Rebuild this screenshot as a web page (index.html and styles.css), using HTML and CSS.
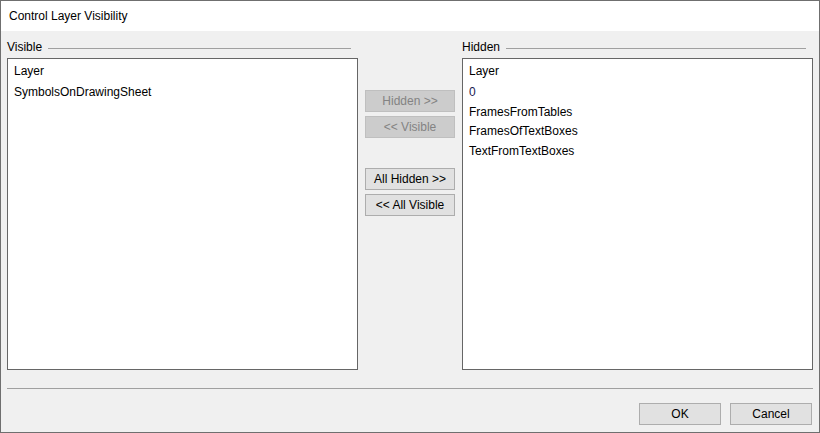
FILE: index.html
```html
<!DOCTYPE html>
<html lang="en">
<head>
    <meta charset="UTF-8">
    <title>Control Layer Visibility</title>
    <link rel="stylesheet" href="styles.css">
</head>
<body>
    <div class="dialog">
        <div class="titleBar">Control Layer Visibility</div>

        <div class="content">
            <div class="panes">
                <div class="group">
                    <div class="groupHead"><span>Visible</span><i></i></div>
                    <div class="listBox">
                        <div class="listHead">Layer</div>
                        <div class="item">SymbolsOnDrawingSheet</div>
                    </div>
                </div>

                <div class="moveBtns">
                    <button class="btn" disabled>Hidden &gt;&gt;</button>
                    <button class="btn" disabled>&lt;&lt; Visible</button>
                    <button class="btn all">All Hidden &gt;&gt;</button>
                    <button class="btn">&lt;&lt; All Visible</button>
                </div>

                <div class="group">
                    <div class="groupHead"><span>Hidden</span><i></i></div>
                    <div class="listBox">
                        <div class="listHead">Layer</div>
                        <div class="item zero">0</div>
                        <div class="item">FramesFromTables</div>
                        <div class="item">FramesOfTextBoxes</div>
                        <div class="item">TextFromTextBoxes</div>
                    </div>
                </div>
            </div>

            <hr class="sep">

            <div class="footer">
                <button class="btn dlg">OK</button>
                <button class="btn dlg">Cancel</button>
            </div>
        </div>
    </div>
</body>
</html>
```

FILE: styles.css
```css
* {
    box-sizing: border-box;
}
body {
    margin: 0;
    font-family: "Liberation Sans", Arial, sans-serif;
    font-size: 12px;
    color: #000;
}
.dialog {
    width: 820px;
    height: 433px;
    border: 1px solid #6f6f6f;
    background-color: #f0f0f0;
    display: flex;
    flex-direction: column;
}
.titleBar {
    height: 30px;
    background-color: #fff;
    padding-left: 8px;
    display: flex;
    align-items: center;
    padding-bottom: 1px;
}
.content {
    padding: 8px 6px 0 6px;
}
.panes {
    display: grid;
    grid-template-columns: 351px 90px 351px;
    column-gap: 7px;
}
.groupHead {
    height: 16px;
    display: flex;
    align-items: center;
    padding-right: 7px;
    margin-bottom: 3px;
}
.groupHead span {
    margin-right: 6px;
}
.groupHead i {
    flex: 1;
    height: 1px;
    margin-top: 3px;
    background-color: #a0a0a0;
}
.listBox {
    height: 312px;
    background-color: #fff;
    border: 1px solid #666;
    padding-left: 6px;
}
.listHead {
    height: 24px;
    line-height: 24px;
}
.item {
    height: 19.5px;
    line-height: 19.5px;
}
.item:first-of-type {
    margin-top: 1px;
}
.item.zero {
    color: #1a2050;
}
.moveBtns {
    padding-top: 51px;
    display: flex;
    flex-direction: column;
    gap: 4px;
}
.btn {
    all: unset;
    box-sizing: border-box;
    height: 22px;
    text-align: center;
    font-family: "Liberation Sans", Arial, sans-serif;
    font-size: 12px;
    background-color: #e1e1e1;
    border: 1px solid #adadad;
    color: #000;
}
.btn:disabled {
    background-color: #cccccc;
    border-color: #bfbfbf;
    color: #838383;
}
.btn.all {
    margin-top: 26px;
}
.sep {
    margin: 18px 0 0 0;
    border: none;
    height: 1px;
    background-color: #a0a0a0;
}
.footer {
    display: flex;
    justify-content: flex-end;
    gap: 9px;
    margin-top: 14px;
    padding-right: 1px;
}
.btn.dlg {
    width: 82px;
}
```
